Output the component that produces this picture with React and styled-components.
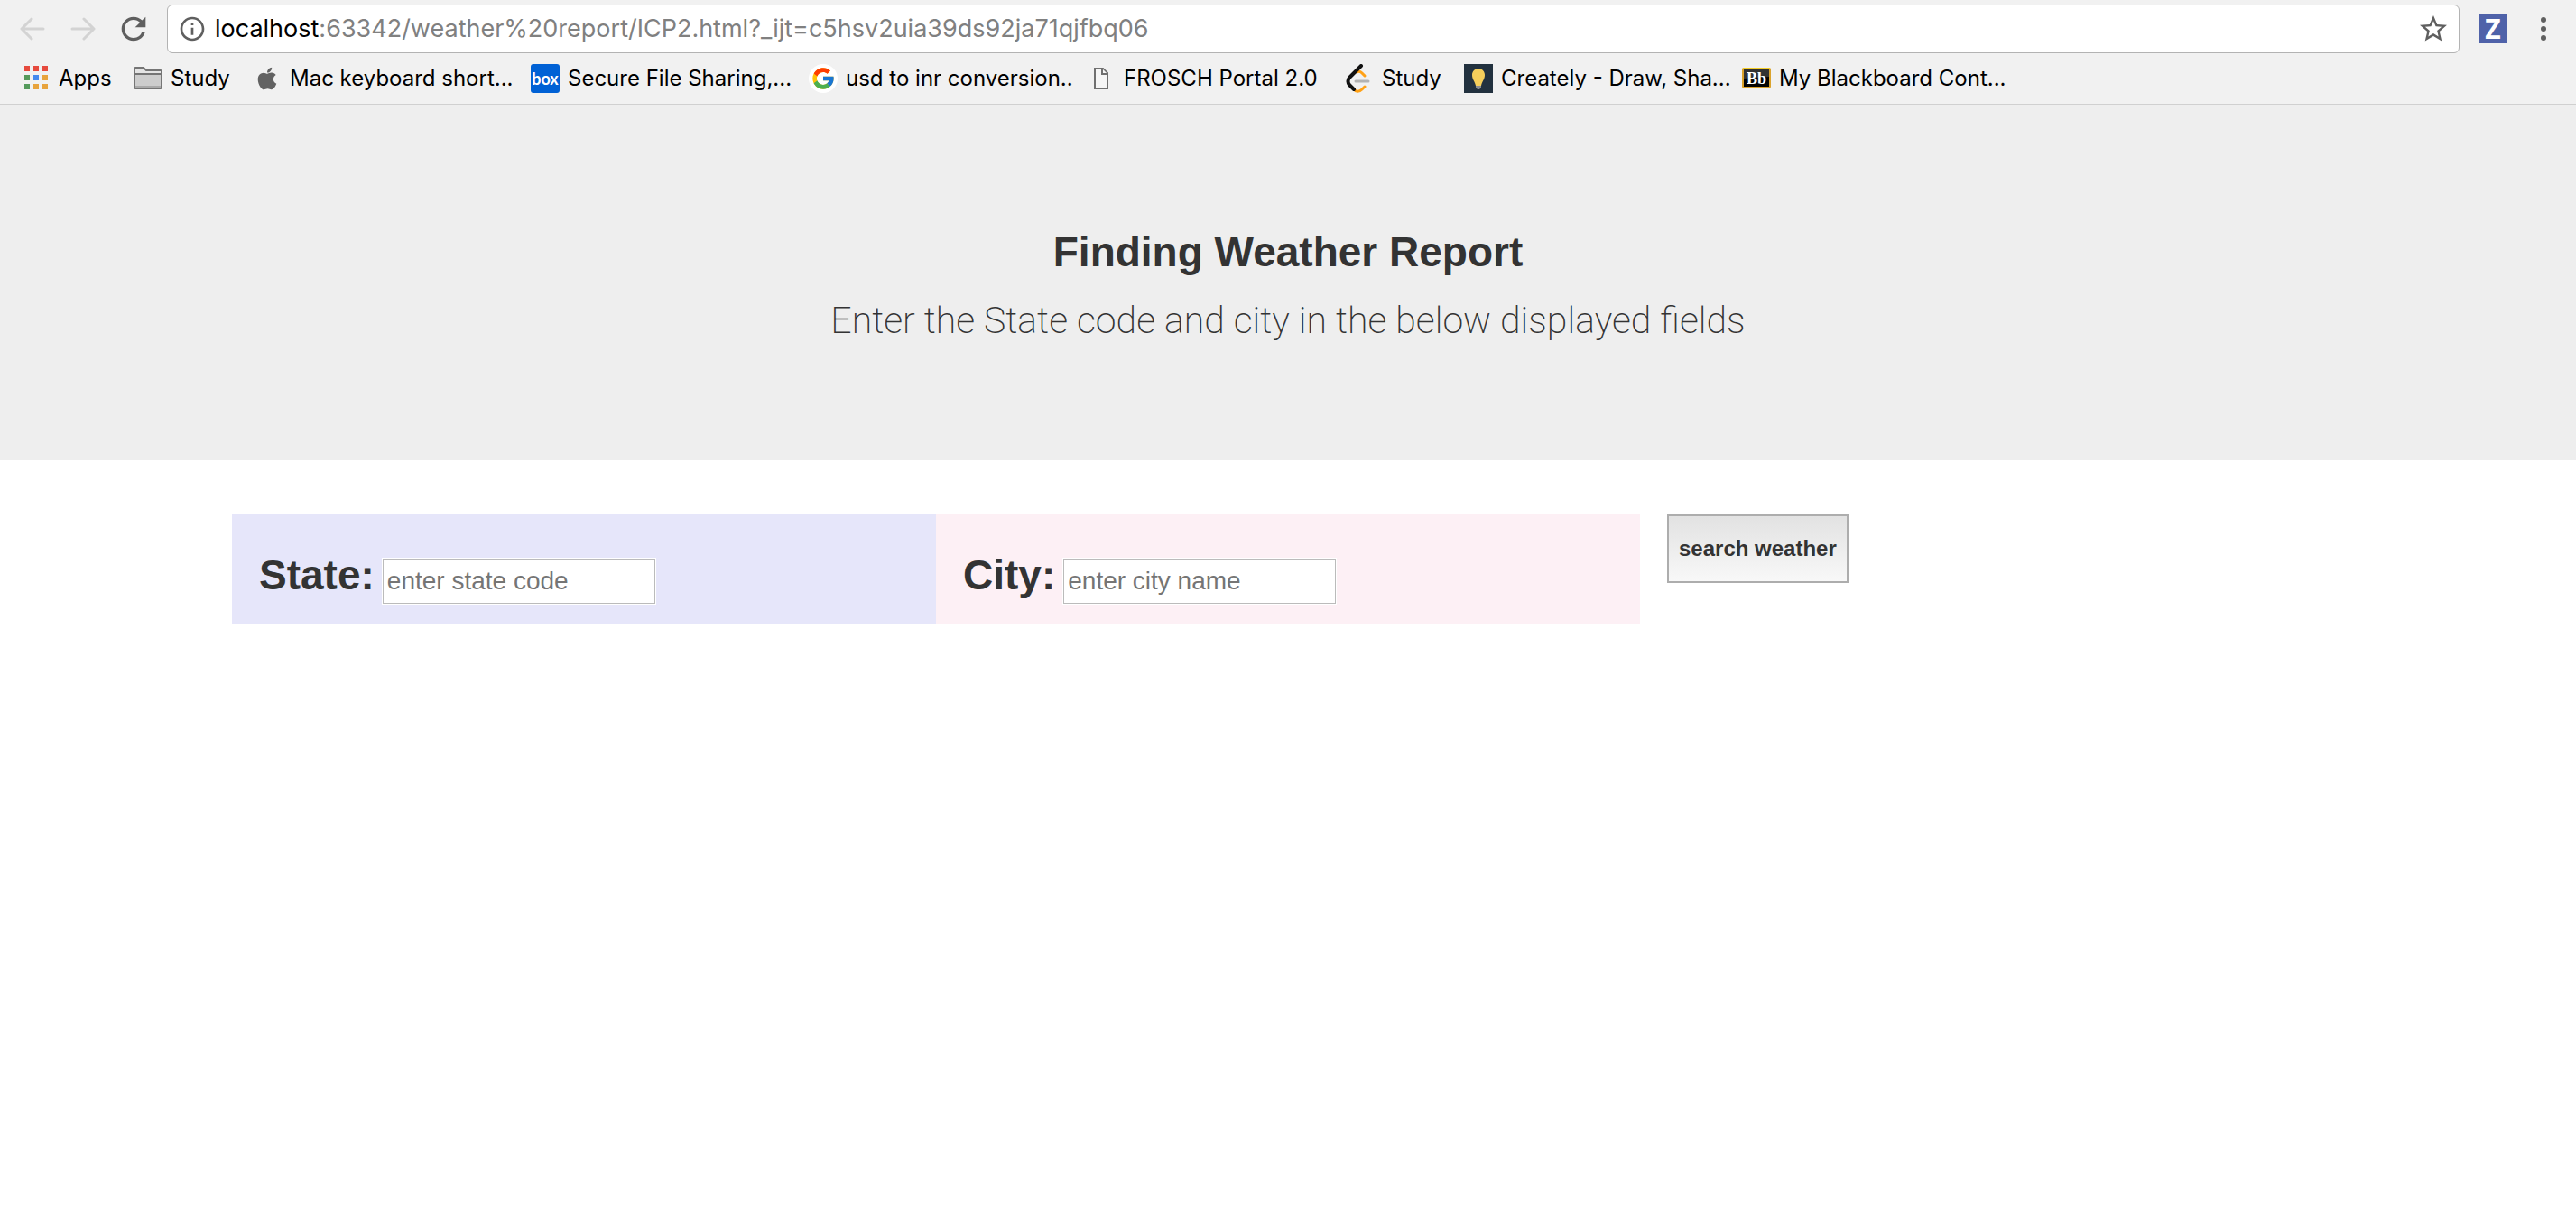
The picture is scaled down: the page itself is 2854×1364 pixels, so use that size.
import React from "react";
import styled, { createGlobalStyle } from "styled-components";
import { FaApple } from "react-icons/fa";
import { FcGoogle } from "react-icons/fc";
import { MdInfoOutline, MdRefresh, MdStarBorder } from "react-icons/md";

const uiFont = `Inter, Roboto, sans-serif`;
const pageFont = `"Helvetica Neue", "Liberation Sans", Arial, sans-serif`;

const GlobalStyle = createGlobalStyle`
  *, *::before, *::after { box-sizing: border-box; }
  body { margin: 0; background: #fff; color: #333; font-family: ${pageFont}; }
  h1, h2, p { margin: 0; }
`;

const BrowserBar = styled.header`
  background: #f1f1f1;
  border-bottom: 1px solid #d0d0d0;
  padding-top: 5px;
  font-family: ${uiFont};
`;

const Toolbar = styled.div`
  display: flex;
  align-items: center;
  padding: 0 16px;
`;

const ToolButton = styled.button`
  display: flex;
  align-items: center;
  justify-content: center;
  width: 40px;
  height: 40px;
  margin-right: ${(p) => p.$after || 0}px;
  padding: 0;
  border: 0;
  background: none;
  color: ${(p) => p.$color || "#5f5f5f"};
`;

const AddressBar = styled.div`
  flex: 1;
  display: flex;
  align-items: center;
  height: 54px;
  padding: 0 8px 0 11px;
  border: 1px solid #b3b3b3;
  border-radius: 6px;
  background: #fff;
  color: #5f5f5f;
`;

const Address = styled.div`
  flex: 1;
  margin-left: 9px;
  font-size: 27px;
  line-height: 36px;
  white-space: nowrap;
  color: #808080;
`;

const Host = styled.span`
  color: #000;
`;

const Extension = styled.button`
  display: flex;
  align-items: center;
  justify-content: center;
  width: 32px;
  height: 32px;
  margin: 0 20px 0 21px;
  padding: 0;
  border: 0;
  background: #4f62a9;
  color: #fff;
  font: 700 30px/32px "Open Sans", sans-serif;
`;

const Bookmarks = styled.nav`
  display: flex;
  gap: 16px;
  height: 56px;
  padding: 0 24px;
  align-items: center;
`;

const Bookmark = styled.a`
  display: flex;
  align-items: center;
  gap: 9px;
  flex: none;
  width: ${(p) => p.$width}px;
  color: #000;
  font-size: 24px;
  line-height: 32px;
  text-decoration: none;
  white-space: nowrap;

  svg { flex: none; }
`;

const Jumbotron = styled.section`
  padding: 136px 30px 125px;
  background: #eee;
  text-align: center;
`;

const Title = styled.h1`
  font-size: 46px;
  font-weight: 700;
  line-height: 54px;
`;

const Lead = styled.p`
  margin-top: 20px;
  font-family: Roboto, sans-serif;
  font-size: 41px;
  font-weight: 200;
  line-height: 59px;
`;

const SearchForm = styled.form`
  display: grid;
  grid-template-columns: repeat(3, 1fr);
  align-items: start;
  max-width: 2340px;
  margin: 60px auto 0;
`;

const Field = styled.div`
  display: flex;
  align-items: baseline;
  gap: 9px;
  padding: 41px 30px 22px;
  background: ${(p) => p.$tint};
`;

const FieldLabel = styled.label`
  font-size: 46px;
  font-weight: 700;
  line-height: 52px;
`;

const TextInput = styled.input`
  width: 302px;
  height: 50px;
  padding: 0 4px;
  border: 1px solid #bbb;
  border-radius: 0;
  box-shadow: 0 0 0 1px #fff;
  background: #fff;
  font-family: ${pageFont};
  font-size: 28px;

  &::placeholder { color: #757575; opacity: 1; }
`;

const SubmitCell = styled.div`
  padding: 0 30px;
`;

const SubmitButton = styled.button`
  height: 76px;
  padding: 0 11px;
  border: 2px solid #adadad;
  border-radius: 0;
  background: linear-gradient(#e2e2e2, #f8f8f8);
  color: #333;
  font-family: ${pageFont};
  font-size: 24px;
  font-weight: 700;
`;

const Arrow = ({ flip }) => (
  <svg width="28" height="28" viewBox="0 0 28 28" fill="none" stroke="currentColor" strokeWidth="3" strokeLinecap="round" strokeLinejoin="round">
    <path d={flip ? "M2 14H26M15 3L26 14L15 25" : "M26 14H2M13 3L2 14L13 25"} />
  </svg>
);

const MenuIcon = () => (
  <svg width="8" height="28" viewBox="0 0 8 28" fill="currentColor">
    <circle cx="4" cy="4" r="3" />
    <circle cx="4" cy="14" r="3" />
    <circle cx="4" cy="24" r="3" />
  </svg>
);

const appColors = ["#e64a3e", "#e64a3e", "#e64a3e", "#559a5c", "#4489ee", "#e8a33c", "#559a5c", "#e8a33c", "#e8a33c"];
const AppsIcon = () => (
  <svg width="32" height="32" viewBox="0 0 32 32">
    {appColors.map((c, i) => (
      <rect key={i} x={3 + (i % 3) * 10} y={2 + Math.floor(i / 3) * 10} width="6" height="6" fill={c} />
    ))}
  </svg>
);

const FolderIcon = () => (
  <svg width="32" height="32" viewBox="0 0 32 32">
    <path d="M1 26V5Q1 4 2 4H11L14 7H30Q31 7 31 8V26Q31 27 30 27H2Q1 27 1 26Z" fill="#e4e4e4" stroke="#757575" strokeWidth="2" />
    <path d="M2 11H30V26H2Z" fill="#cdcdcd" />
    <path d="M2 25H30" stroke="#aaa" strokeWidth="2" />
    <path d="M1 11H31" stroke="#757575" strokeWidth="2" />
  </svg>
);

const AppleIcon = () => (
  <svg width="32" height="32" viewBox="0 0 32 32" color="#626262">
    <FaApple x="2" y="2" size={28} />
  </svg>
);

const BoxIcon = () => (
  <svg width="32" height="32" viewBox="0 0 32 32">
    <rect width="32" height="32" rx="3" fill="#0061d5" />
    <text x="16" y="23" textAnchor="middle" fill="#fff" fontFamily="Lato, sans-serif" fontWeight="700" fontSize="18">box</text>
  </svg>
);

const GoogleIcon = () => (
  <svg width="32" height="32" viewBox="0 0 32 32">
    <circle cx="16" cy="16" r="16" fill="#fff" />
    <FcGoogle x="2" y="2" size={28} />
  </svg>
);

const PageIcon = () => (
  <svg width="32" height="32" viewBox="0 0 32 32" fill="#f6f6f6" stroke="#707070" strokeWidth="2">
    <path d="M9 5H18L23 10V27H9Z" />
    <path d="M17 5V11H23" />
  </svg>
);

const LeetCodeIcon = () => (
  <svg width="32" height="32" viewBox="0 0 32 32" fill="none" strokeLinecap="round" strokeLinejoin="round">
    <path d="M13 9Q16 7 19 10L22 13" stroke="#ffa116" strokeWidth="3" />
    <path d="M9 27Q14 33 19 28L22 25" stroke="#ffa116" strokeWidth="3" />
    <path d="M12 19H26" stroke="#b3b3b3" strokeWidth="3" />
    <path d="M18 2L5 15Q2 19 5 23L10 28" stroke="#111" strokeWidth="4" />
  </svg>
);

const BulbIcon = () => (
  <svg width="32" height="32" viewBox="0 0 32 32">
    <rect width="32" height="32" fill="#22313f" />
    <path d="M13 23H19V26L17 28H15L13 26Z" fill="#8a8d91" />
    <path d="M16 5C11 5 9 9 9 12C9 17 12 19 13 24H19C20 19 23 17 23 12C23 9 21 5 16 5Z" fill="#f5ce5b" />
  </svg>
);

const BlackboardIcon = () => (
  <svg width="32" height="32" viewBox="0 0 32 32">
    <rect x="1" y="5" width="30" height="21" rx="1" fill="#050505" stroke="#dba32c" strokeWidth="2" />
    <path d="M2 6H30V14L2 16Z" fill="#333" />
    <path d="M1 5H31" stroke="#f3cd28" strokeWidth="2" />
    <text x="16" y="22" textAnchor="middle" fill="#fff" fontFamily="Liberation Serif, serif" fontWeight="700" fontSize="18">Bb</text>
  </svg>
);

const bookmarks = [
  { label: "Apps", Icon: AppsIcon, width: 108 },
  { label: "Study", Icon: FolderIcon, width: 116 },
  { label: "Mac keyboard short...", Icon: AppleIcon, width: 292 },
  { label: "Secure File Sharing,...", Icon: BoxIcon, width: 292 },
  { label: "usd to inr conversion..", Icon: GoogleIcon, width: 292 },
  { label: "FROSCH Portal 2.0", Icon: PageIcon, width: 270 },
  { label: "Study", Icon: LeetCodeIcon, width: 116 },
  { label: "Creately - Draw, Sha...", Icon: BulbIcon, width: 292 },
  { label: "My Blackboard Cont...", Icon: BlackboardIcon, width: 292 },
];

export default function App() {
  return (
    <>
      <GlobalStyle />
      <BrowserBar>
        <Toolbar>
          <ToolButton aria-label="Back" $color="#d3d3d3" $after={16}><Arrow /></ToolButton>
          <ToolButton aria-label="Forward" $color="#d3d3d3" $after={16}><Arrow flip /></ToolButton>
          <ToolButton aria-label="Reload" $after={17}><MdRefresh size={40} /></ToolButton>
          <AddressBar>
            <MdInfoOutline size={32} />
            <Address role="textbox" aria-label="Address">
              <Host>localhost</Host>:63342/weather%20report/ICP2.html?_ijt=c5hsv2uia39ds92ja71qjfbq06
            </Address>
            <ToolButton aria-label="Bookmark this page"><MdStarBorder size={36} /></ToolButton>
          </AddressBar>
          <Extension aria-label="Extension">Z</Extension>
          <ToolButton aria-label="Menu"><MenuIcon /></ToolButton>
        </Toolbar>
        <Bookmarks aria-label="Bookmarks">
          {bookmarks.map(({ label, Icon, width }, i) => (
            <Bookmark key={i} href="#" $width={width}>
              <Icon />
              {label}
            </Bookmark>
          ))}
        </Bookmarks>
      </BrowserBar>
      <main>
        <Jumbotron>
          <Title>Finding Weather Report</Title>
          <Lead>Enter the State code and city in the below displayed fields</Lead>
        </Jumbotron>
        <SearchForm onSubmit={(e) => e.preventDefault()}>
          <Field $tint="#e6e6fa">
            <FieldLabel htmlFor="state">State:</FieldLabel>
            <TextInput id="state" type="text" placeholder="enter state code" />
          </Field>
          <Field $tint="#fdf0f5">
            <FieldLabel htmlFor="city">City:</FieldLabel>
            <TextInput id="city" type="text" placeholder="enter city name" />
          </Field>
          <SubmitCell>
            <SubmitButton type="submit">search weather</SubmitButton>
          </SubmitCell>
        </SearchForm>
      </main>
    </>
  );
}
